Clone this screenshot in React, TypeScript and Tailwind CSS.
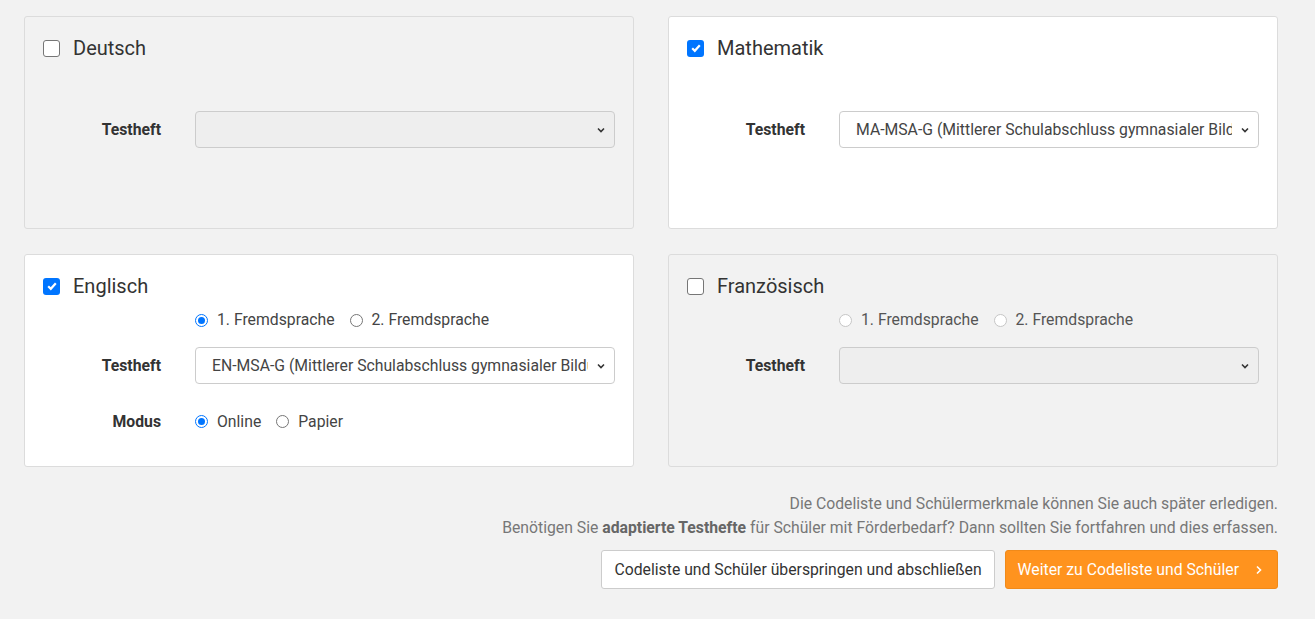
import React from "react";

const Check = ({ on }: { on?: boolean }) =>
  on ? (
    <span className="w-[17px] h-[17px] rounded-[3px] bg-[#0075ff] flex items-center justify-center shrink-0">
      <svg width="12" height="12" viewBox="0 0 12 12"><path d="M2.2 6.3 L4.8 8.8 L9.8 3.2" stroke="white" strokeWidth="2.2" fill="none" /></svg>
    </span>
  ) : (
    <span className="w-[17px] h-[17px] rounded-[3px] border-[1.5px] border-[#767676] bg-white shrink-0" />
  );

const Radio = ({ on, disabled }: { on?: boolean; disabled?: boolean }) =>
  on ? (
    <span className="w-[13px] h-[13px] rounded-full border-[1.5px] border-[#0075ff] bg-white flex items-center justify-center shrink-0">
      <span className="w-[7px] h-[7px] rounded-full bg-[#0075ff]" />
    </span>
  ) : (
    <span className={`w-[13px] h-[13px] rounded-full border ${disabled ? "border-[#c6c6c6]" : "border-[#767676]"} bg-white shrink-0`} />
  );

const Select = ({ text, disabled }: { text?: string; disabled?: boolean }) => (
  <div className={`flex-1 min-w-0 h-[37px] rounded-[4px] border border-[#ccc] flex items-center pl-[16px] pr-[8px] ${disabled ? "bg-[#eeeeee]" : "bg-white"}`}>
    <span className="flex-1 min-w-0 overflow-hidden whitespace-nowrap text-[15.75px] text-[#444]">{text}</span>
    <svg width="10" height="10" viewBox="0 0 10 10" className="ml-2 shrink-0"><path d="M2 3.5 L5 6.5 L8 3.5" stroke="#333" strokeWidth="1.6" fill="none" /></svg>
  </div>
);

const Row = ({ label, children, mt }: { label?: string; children: React.ReactNode; mt: string }) => (
  <div className={`flex items-center gap-[34px] ${mt}`}>
    <div className="w-[118px] shrink-0 text-right text-[15.75px] font-bold text-[#333]">{label}</div>
    {children}
  </div>
);

const FS = ({ disabled, first }: { disabled?: boolean; first?: boolean }) => (
  <div className={`flex items-center gap-[15px] h-[20px] text-[15.75px] ${disabled ? "text-[#555]" : "text-[#444]"}`}>
    <span className="flex items-center gap-[9px]"><Radio on={first} disabled={disabled} />1. Fremdsprache</span>
    <span className="flex items-center gap-[9px]"><Radio disabled={disabled} />2. Fremdsprache</span>
  </div>
);

const Card = ({ title, on, children }: { title: string; on?: boolean; children: React.ReactNode }) => (
  <div className={`h-[213px] rounded-[3px] border border-[#dcdcdc] px-[18px] pt-[16px] ${on ? "bg-white" : "bg-[#f2f2f2]"}`}>
    <div className="h-[30px] flex items-center gap-[13px]">
      <Check on={on} />
      <span className="text-[20px] text-[#333]">{title}</span>
    </div>
    {children}
  </div>
);

const MA = "MA-MSA-G (Mittlerer Schulabschluss gymnasialer Bildungsgang)";
const EN = "EN-MSA-G (Mittlerer Schulabschluss gymnasialer Bildungsgang)";

export default function App() {
  return (
    <div className="min-h-[619px] bg-[#f2f2f2] px-[24px] pt-[16px] text-[#333]" style={{ fontFamily: "Roboto, sans-serif" }}>
      <div className="grid grid-cols-2 gap-x-[34px] gap-y-[25px] w-[1254px]">
        <Card title="Deutsch">
          <Row label="Testheft" mt="mt-[48px]"><Select disabled /></Row>
        </Card>
        <Card title="Mathematik" on>
          <Row label="Testheft" mt="mt-[48px]"><Select text={MA} /></Row>
        </Card>
        <Card title="Englisch" on>
          <Row mt="mt-[9px]"><FS first /></Row>
          <Row label="Testheft" mt="mt-[17px]"><Select text={EN} /></Row>
          <Row label="Modus" mt="mt-[26px]">
            <div className="flex items-center gap-[15px] text-[15.75px] text-[#444] h-[20px]">
              <span className="flex items-center gap-[9px]"><Radio on />Online</span>
              <span className="flex items-center gap-[9px]"><Radio />Papier</span>
            </div>
          </Row>
        </Card>
        <Card title="Französisch">
          <Row mt="mt-[9px]"><FS disabled /></Row>
          <Row label="Testheft" mt="mt-[17px]"><Select disabled /></Row>
        </Card>
      </div>
      <div className="w-[1254px] mt-[25px] text-right text-[15.75px] text-[#777] leading-[24px]">
        <div>Die Codeliste und Schülermerkmale können Sie auch später erledigen.</div>
        <div>Benötigen Sie <b className="text-[#666]">adaptierte Testhefte</b> für Schüler mit Förderbedarf? Dann sollten Sie fortfahren und dies erfassen.</div>
      </div>
      <div className="w-[1254px] flex justify-end gap-[10px] mt-[10px]">
        <button className="h-[39px] px-[12px] bg-white border border-[#ccc] rounded-[3px] text-[15.75px] text-[#333]">Codeliste und Schüler überspringen und abschließen</button>
        <button className="h-[39px] pl-[12px] pr-[14px] bg-[#ff931e] border border-[#f08a1a] rounded-[3px] text-[15.75px] text-white flex items-center gap-[16px]">
          Weiter zu Codeliste und Schüler
          <svg width="8" height="10" viewBox="0 0 8 10"><path d="M2 1.5 L5.5 5 L2 8.5" stroke="white" strokeWidth="1.6" fill="none" /></svg>
        </button>
      </div>
    </div>
  );
}
